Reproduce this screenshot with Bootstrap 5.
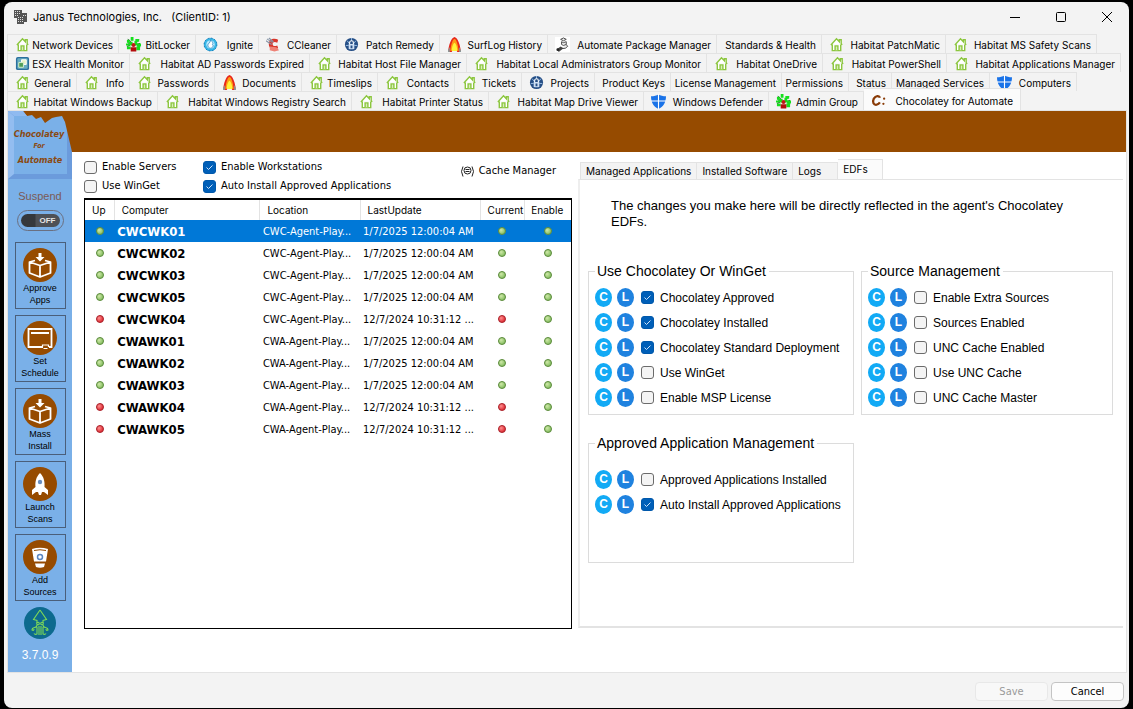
<!DOCTYPE html>
<html lang="en">
<head>
<meta charset="utf-8">
<meta name="viewport" content="width=device-width, initial-scale=1">
<title>Janus Technologies, Inc.</title>
<link rel="stylesheet" href="https://cdn.jsdelivr.net/npm/bootstrap@5.3.0/dist/css/bootstrap.min.css">
<script src="https://cdn.jsdelivr.net/npm/bootstrap@5.3.0/dist/js/bootstrap.bundle.min.js"></script>
<style>
  :root { --brown:#964b00; --sky:#7ab0e8; --line:#e3e3e3; --tahoma:"DejaVu Sans Condensed","DejaVu Sans",sans-serif; --ui:Inter,"Open Sans",sans-serif; --arial:"Liberation Sans",Arial,sans-serif; }
  body { background:#000; color:#000; font:11px/16px var(--tahoma); min-height:100vh; padding:2px 4px; }
  button { color:inherit; font:inherit; padding:0; border:0; background:none; }
  .win { background:#f3f3f3; border-radius:8px; min-height:calc(100vh - 4px); overflow:hidden; }
  .titlebar { height:32px; padding:0 14px 2px 9px; font:11px/16px var(--ui); white-space:pre; }
  .winctl { gap:30px; }
  .winctl button { width:16px; height:16px; display:flex; align-items:center; justify-content:center; }

  .tabrows { padding:0 2px 0 3px; font:10px/16px var(--ui); }
  .tabrow { display:grid; height:19px; }
  .t1 { grid-template-columns:112fr 77fr 63fr 78fr 103fr 108fr 169fr 105fr 124fr 151fr 30fr; }
  .t2 { grid-template-columns:123fr 180fr 157fr 240fr 116fr 124fr 174fr 6fr; }
  .t3 { grid-template-columns:70fr 53fr 85fr 87fr 76fr 77fr 67fr 73fr 76fr 111fr 67fr 43fr 98fr 87fr 50fr; }
  .t4 { grid-template-columns:151fr 194fr 137fr 155fr 125fr 95fr 157fr 106fr; }
  .tab { display:flex; align-items:center; justify-content:flex-end; min-width:0; padding:2px 5px 0 5px; white-space:nowrap; border-top:1px solid var(--line); border-right:1px solid var(--line); }
  .tabrow .tab:first-child { border-left:1px solid var(--line); }
  .tab svg { width:15px; height:15px; margin:0 auto 1px 2px; flex:none; }
  .tab.on { background:#fbfbfb; margin-top:-3px; padding-right:7px; }

  .client { margin:0 2px 0 3px; border:1px solid var(--line); background:#fff; }
  .side { width:64px; background:var(--sky); font-family:var(--arial); }
  .logo { display:block; width:64px; height:68px; }
  .suspend { font-size:11px; line-height:14px; color:#7a5a55; margin-top:10px; }
  .switch { width:47px; height:21px; border:1px solid #6a6f80; border-radius:11px; padding:3px; margin-top:7px; }
  .switch span { display:block; height:13px; border-radius:7px; background:linear-gradient(90deg,#35383c 0 14px,#4e5156 15px); color:#e6e6e6; font:bold 8px/13px var(--arial); text-align:right; padding-right:4px; }
  .act { width:51px; height:67px; border:1px solid #4a5f7a; font-size:9px; line-height:12px; color:#000; display:flex; flex-direction:column; align-items:center; padding-top:5px; }
  .act svg { width:34px; height:34px; flex:none; }
  .acts { margin-top:11px; gap:6px; }
  .squid { width:32px; height:32px; margin-top:6px; }
  .ver { color:#fff; font-size:12px; margin:8px 0 9px; }
  .banner { height:41px; background:var(--brown); }

  .panes { display:grid; grid-template-columns:488fr 545fr; gap:6px; padding:7px 3px 43px 12px; }
  .pane { display:flex; flex-direction:column; min-width:0; }
  .opts { display:grid; grid-template-columns:119px 1fr auto; height:39px; padding-right:16px; }
  .opts label, .edf label { display:inline-flex; align-items:center; gap:5px; }
  .opts .pair { display:flex; flex-direction:column; gap:3px; }
  .form-check-input { width:13px; height:13px; margin:0; float:none; flex:none; border:1px solid #6b6b6b; border-radius:3px !important; background-color:#f4f4f4; }
  .form-check-input:checked { background-color:#005fb8; border-color:#0058ab; background-size:11px; background-image:url("data:image/svg+xml,%3csvg xmlns='http://www.w3.org/2000/svg' viewBox='0 0 11 11'%3e%3cpath fill='none' stroke='%23cfe4fa' d='m2.500 5.500 2 2 4-4'/%3e%3c/svg%3e") !important; }
  .list { flex:1; border:1px solid #000; border-top-width:2px; }
  .list table { width:100%; table-layout:fixed; border-collapse:collapse; }
  .list th { height:20px; padding:0 0 0 7px; font-weight:400; font:10px/16px var(--ui); border-right:1px solid var(--line); white-space:nowrap; }
  .list th:last-child { border:0; padding-left:6px; }
  .list td { height:22px; padding:2px 3px 0; white-space:nowrap; overflow:hidden; text-overflow:ellipsis; }
  .list td.pc { font-size:13px; font-weight:700; }
  .list tr.sel { background:#0078d7; color:#fff; }
  .dot { display:block; width:8px; height:8px; margin:0 auto 2px; border-radius:50%; border:1px solid #5b8a3c; background:radial-gradient(circle at 35% 35%,#cfe8a8,#8cc267 70%); }
  .dot.r { border-color:#a8232b; background:radial-gradient(circle at 35% 35%,#ff8f8f,#e0323a 70%); }

  .subtabs { display:flex; align-items:flex-end; height:21px; padding-left:2px; font:10px/16px var(--ui); margin-bottom:-1px; }
  .subtabs button { height:18px; padding:0 5px; border:1px solid var(--line); border-left-width:0; background:#f3f3f3; text-align:left; }
  .subtabs button:first-child { border-left-width:1px; }
  .subtabs .on { height:21px; width:45px; background:#fbfbfb; border-bottom:0; padding-bottom:2px; }
  .edf { flex:1; border-top:1px solid var(--line); border-left:2px solid #eee; border-bottom:2px solid var(--line); padding:18px 10px 0 8px; font:12px/16px var(--arial); margin-bottom:1px; }
  .note { font-size:13px; line-height:16px; margin:0 0 32px 23px; max-width:480px; min-height:32px; }
  .groups { display:grid; grid-template-columns:266fr 252fr; gap:19px 7px; }
  .groups fieldset { border:1px solid #dcdcdc; padding:5px 0 4px 6px; min-height:152px; }
  .groups fieldset.tall { min-height:129px; padding-top:15px; }
  .groups legend { float:none; width:auto; margin:0; padding:0 3px 0 2px; font-size:14px; line-height:18px; }
  .ln { display:flex; align-items:center; height:25px; white-space:nowrap; }
  .ln button { width:17px; height:19px; border-radius:50%; color:#fff; font:bold 12px/19px var(--arial); background:#12aaf5; margin-right:5px; }
  .ln button + button { background:#1f82df; margin-right:7px; }
  .ln label { gap:6px; }

  .foot { padding:9px 5px 7px; gap:3px; }
  .foot button { width:73px; height:19px; border:1px solid #c4c4c4; border-radius:4px; background:#fdfdfd; line-height:16px; font-size:11px; }
  .foot button:disabled { color:#9a9a9a; border-color:#e8e8e8; background:#f8f8f8; }
</style>
</head>
<body>
<svg class="d-none" xmlns="http://www.w3.org/2000/svg">
  <symbol id="house" viewBox="0 0 16 16"><path d="M2 8.500 8 2l3 3V3h2v4l1 1.500M3.500 8v6.500h9V8" fill="#fff" stroke="#8cc63f" stroke-width="1.500"/><path d="M6.500 14V9.500h3V14" fill="#d8efb8" stroke="#8cc63f" stroke-width="1.500"/></symbol>
  <symbol id="people" viewBox="0 0 16 16"><path d="M5 5 2 2.500M11 5l3-2M4 9 1 10M12 9l3 2M5 8l-3-2M11 8l4-1" stroke="#111" stroke-width="1"/><path d="M5 0h3v4H5zM1 3h3v3H1zM10 2h4v3h-4zM0 7h4v2H0zM3 5h4v4H3zM9 4h3v5H9zM12 7h4v3h-4zM1 10h4v3H1zM11 10h4v4h-4z" fill="#14e01c"/><circle cx="8" cy="8.500" r="2.200" fill="#c01818"/><path d="M5 15.500V11h6v4.500z" fill="#b40d0d"/></symbol>
  <symbol id="ignite" viewBox="0 0 16 16"><circle cx="8" cy="8" r="7" fill="#39b7e6"/><circle cx="8" cy="8" r="6.800" fill="none" stroke="#0b6fae" stroke-dasharray="2 1.500"/><circle cx="8" cy="8" r="4.500" fill="#bdeaff"/><path d="M8 3c3 3 3 4 2 5 2 1 0 4-2 4s-4-3-2-5c1-1 2-2 2-4z" fill="#fff" stroke="#1580c0" stroke-width=".8"/></symbol>
  <symbol id="cclean" viewBox="0 0 16 16"><path d="M13 3C9 .5 3 2 3 7.500s5 7 10 4.500l-1-3c-3 1.500-5 .5-5-1.500s2-3 5-1.500z" fill="#d8352a"/><path d="M0 4l6 4M1 2l6 4M3 1l5 4" stroke="#8796a8" stroke-width="1.200"/><path d="M4 10l7 1 3 3-5 1.500-5-1.500z" fill="#ee8175"/></symbol>
  <symbol id="globe" viewBox="0 0 16 16"><circle cx="8" cy="8" r="7" fill="#264f86"/><path d="M8 1v3M3.500 4l2 3M12.500 4l-2 3M2 9h3M11 9h3" stroke="#9cc0e6"/><path d="M6 7.500V6a2 2 0 0 1 4 0v1.500" fill="none" stroke="#fff" stroke-width="1.200"/><path d="M5 7.500h6V12l-1 1H6l-1-1z" fill="#cfe0f4"/><path d="M7 9h2v3H7z" fill="#264f86"/></symbol>
  <symbol id="flame" viewBox="0 0 16 16"><path d="M1 16C2 9 4 1 8 0c4 1 6 9 7 16h-4L8 11l-3 5z" fill="#e8261b"/><path d="M3.500 15C4 9 6 2 8 2s4 7 4.500 13l-2-1h-5z" fill="#ff9a14"/><path d="M5 15c0-5 2-9 3-9s3 4 3 9z" fill="#fff23a"/><path d="M1 16c0-2 1-4 2-5v5zM15 16c0-2-1-4-2-5v5z" fill="#8b9a9a"/></symbol>
  <symbol id="pkg" viewBox="0 0 16 16"><rect width="16" height="16" fill="#fff"/><path d="M6 2.500 9 1l3 1.500L9 4zM7 5l2 1 3-1v3l-3 1-2-1zM12 8l1.500 2L11 12l-5 .5" fill="#eee" stroke="#444"/><path d="M2 13l4-3 3 2-5 4z" fill="#444"/><circle cx="3" cy="13.500" r="1.500" fill="#222"/></symbol>
  <symbol id="esx" viewBox="0 0 16 16"><rect x="1" y="1" width="14" height="14" rx="2" fill="#2b6f9e"/><rect x="2.500" y="2.500" width="11" height="11" rx="1" fill="#6aaec0"/><path d="M7 4h5v5H7z" fill="#e9f3c4" stroke="#fff"/><path d="M4 7h5v5H4z" fill="#4f9d56" stroke="#d9f0d0"/></symbol>
  <symbol id="shield" viewBox="0 0 16 16"><path d="M0 2.500C3 2.500 6 1.500 8 .5c2 1 5 2 8 2C16 9 13 14 8 16 3 14 0 9 0 2.500z" fill="#1a73e8"/><path d="M8 0v16M0 7.500h16" stroke="#fff" stroke-width="1.200"/></symbol>
  <symbol id="choco" viewBox="0 0 16 16"><path d="M9.500 5C9 2.500 5 2.500 3 6c-2 4 0 7 3 6.500 1.500-.3 2.500-1 3.500-2.500" fill="none" stroke="#8a3c08" stroke-width="2.400"/><circle cx="14" cy="6" r="1.200" fill="#8a3c08"/><circle cx="13.200" cy="11.500" r="1.200" fill="#8a3c08"/></symbol>
  <symbol id="box" viewBox="0 0 34 34"><circle cx="17" cy="17" r="17" fill="#964b00"/><path d="M15.500 5h3v4h3L17 13.500 12.500 9h3z" fill="#fff"/><path d="M12 12.500 6.500 14v11L17 29l10.500-4V14L22 12.500M6.500 14 17 17.500 27.500 14M17 17.500V29" fill="none" stroke="#fff" stroke-width="1.800" stroke-linejoin="round"/></symbol>
</svg>

<div class="win d-flex flex-column">
  <header class="titlebar d-flex align-items-center">
    <svg width="16" height="16" viewBox="0 0 16 16" class="me-1"><path d="M1 1h8v3h5v9h-3v2H4V9H1z" fill="#555"/><path d="M2 2.500h6M2 4.500h6M2 6.500h4M5 8.500h6M5 10.500h5M5 12.500h5M10 6.500h4" stroke="#ddd" stroke-dasharray="1 1"/></svg>
    <span>Janus Technologies, Inc.   (ClientID: 1)</span>
    <div class="winctl d-flex ms-auto">
      <button aria-label="Minimize"><svg width="12" height="12"><path d="M1 6.500h10" stroke="#000"/></svg></button>
      <button aria-label="Maximize"><svg width="12" height="12"><rect x="1.500" y="1.500" width="9" height="9" rx="1" fill="none" stroke="#000"/></svg></button>
      <button aria-label="Close"><svg width="12" height="12"><path d="m1 1 10 10M11 1 1 11" stroke="#000"/></svg></button>
    </div>
  </header>

  <nav class="tabrows" role="tablist">
    <div class="tabrow t1">
      <button class="tab"><svg><use href="#house"/></svg>Network Devices</button>
      <button class="tab"><svg><use href="#people"/></svg>BitLocker</button>
      <button class="tab"><svg><use href="#ignite"/></svg>Ignite</button>
      <button class="tab"><svg><use href="#cclean"/></svg>CCleaner</button>
      <button class="tab"><svg><use href="#globe"/></svg>Patch Remedy</button>
      <button class="tab"><svg><use href="#flame"/></svg>SurfLog History</button>
      <button class="tab"><svg><use href="#pkg"/></svg>Automate Package Manager</button>
      <button class="tab">Standards &amp; Health</button>
      <button class="tab"><svg><use href="#house"/></svg>Habitat PatchMatic</button>
      <button class="tab"><svg><use href="#house"/></svg>Habitat MS Safety Scans</button>
    </div>
    <div class="tabrow t2">
      <button class="tab"><svg><use href="#esx"/></svg>ESX Health Monitor</button>
      <button class="tab"><svg><use href="#house"/></svg>Habitat AD Passwords Expired</button>
      <button class="tab"><svg><use href="#house"/></svg>Habitat Host File Manager</button>
      <button class="tab"><svg><use href="#house"/></svg>Habitat Local Administrators Group Monitor</button>
      <button class="tab"><svg><use href="#house"/></svg>Habitat OneDrive</button>
      <button class="tab"><svg><use href="#house"/></svg>Habitat PowerShell</button>
      <button class="tab"><svg><use href="#house"/></svg>Habitat Applications Manager</button>
    </div>
    <div class="tabrow t3">
      <button class="tab"><svg><use href="#house"/></svg>General</button>
      <button class="tab"><svg><use href="#house"/></svg>Info</button>
      <button class="tab"><svg><use href="#house"/></svg>Passwords</button>
      <button class="tab"><svg><use href="#flame"/></svg>Documents</button>
      <button class="tab"><svg><use href="#house"/></svg>Timeslips</button>
      <button class="tab"><svg><use href="#house"/></svg>Contacts</button>
      <button class="tab"><svg><use href="#house"/></svg>Tickets</button>
      <button class="tab"><svg><use href="#globe"/></svg>Projects</button>
      <button class="tab">Product Keys</button>
      <button class="tab">License Management</button>
      <button class="tab">Permissions</button>
      <button class="tab">Status</button>
      <button class="tab">Managed Services</button>
      <button class="tab"><svg><use href="#shield"/></svg>Computers</button>
    </div>
    <div class="tabrow t4">
      <button class="tab"><svg><use href="#house"/></svg>Habitat Windows Backup</button>
      <button class="tab"><svg><use href="#house"/></svg>Habitat Windows Registry Search</button>
      <button class="tab"><svg><use href="#house"/></svg>Habitat Printer Status</button>
      <button class="tab"><svg><use href="#house"/></svg>Habitat Map Drive Viewer</button>
      <button class="tab"><svg><use href="#shield"/></svg>Windows Defender</button>
      <button class="tab"><svg><use href="#people"/></svg>Admin Group</button>
      <button class="tab on" aria-selected="true"><svg><use href="#choco"/></svg>Chocolatey for Automate</button>
    </div>
  </nav>

  <main class="client d-flex flex-grow-1">
    <aside class="side d-flex flex-column align-items-center flex-shrink-0">
      <svg class="logo" viewBox="0 0 64 68">
        <rect width="64" height="68" fill="#6b9bdc"/><path d="M0 0v68l6-5V5z" fill="#93bdf0"/><rect x="6" y="3" width="53" height="60" fill="#7ab0e8"/>
        <path d="M15 0l4 5 5-1 4 4 5-2 4 6 7-5 4-1 6-1 3 6 7 30V0z" fill="#964b00"/>
        <path d="M0 0h15l4 5H6z" fill="#8fbaf0"/>
        <g fill="#8a4a12" font-family="'DejaVu Sans Condensed',sans-serif" font-weight="700" font-style="italic" text-anchor="middle"><text x="31" y="26" font-size="9">Chocolatey</text><text x="31" y="37" font-size="7">For</text><text x="32" y="52" font-size="9">Automate</text></g>
      </svg>
      <div class="suspend" id="susp">Suspend</div>
      <button class="switch" role="switch" aria-checked="false" aria-labelledby="susp"><span>OFF</span></button>
      <div class="acts d-flex flex-column">
        <button class="act"><svg><use href="#box"/></svg>Approve<br>Apps</button>
        <button class="act"><svg viewBox="0 0 34 34"><circle cx="17" cy="17" r="17" fill="#964b00"/><path d="M20 26H5.500V8h23v18H26M8 12h18" fill="none" stroke="#fff" stroke-width="1.800"/><path d="M19.500 26v-2h6v2M20.500 27.500h4" fill="none" stroke="#fff" stroke-width="1.200"/></svg>Set<br>Schedule</button>
        <button class="act"><svg><use href="#box"/></svg>Mass<br>Install</button>
        <button class="act"><svg viewBox="0 0 34 34"><circle cx="17" cy="17" r="17" fill="#964b00"/><path d="M17 6c4 4 5 9 4.500 14l3.500 3v5l-4-3h-2l-1 3h-2l-1-3h-2l-4 3v-5l3.500-3C12 15 13 10 17 6z" fill="#fff"/><circle cx="17" cy="15" r="2.200" fill="#6a8fc0"/></svg>Launch<br>Scans</button>
        <button class="act"><svg viewBox="0 0 34 34"><circle cx="17" cy="17" r="17" fill="#964b00"/><path d="M9 9q8-2.500 16 0l-2 12.500H11z M12 23.500h10l-1 3.500q-4 1.500-8 0z" fill="#fff"/><path d="M11 10.500q6-1.500 12 0" stroke="#964b00" fill="none"/><circle cx="17" cy="17" r="2.500" fill="#fff" stroke="#5b86c0" stroke-width="1.500"/></svg>Add<br>Sources</button>
      </div>
      <svg class="squid" viewBox="0 0 32 32"><circle cx="16" cy="16" r="16" fill="#0d6a8e"/><g fill="none" stroke="#7ed957" stroke-width="1.100"><path d="M16 3 9.500 12.500l3.500 1v2.500M16 3l6.500 9.500-3.500 1V16M13 18c0 4-5 1-5 5q2 1 2-1M19 18c0 4 5 1 5 5q-2 1-2-1M15 19v9M17 19v9M13 20v7q-2 1-3-.5M19 20v7q2 1 3-.5"/><circle cx="14" cy="16.500" r="1.300"/><circle cx="18" cy="16.500" r="1.300"/></g></svg>
      <div class="ver">3.7.0.9</div>
    </aside>

    <div class="flex-grow-1 d-flex flex-column">
      <div class="banner"></div>
      <div class="panes flex-grow-1">
        <section class="pane">
          <div class="opts">
            <div class="pair">
              <label><input class="form-check-input" type="checkbox">Enable Servers</label>
              <label><input class="form-check-input" type="checkbox">Use WinGet</label>
            </div>
            <div class="pair">
              <label><input class="form-check-input" type="checkbox" checked>Enable Workstations</label>
              <label><input class="form-check-input" type="checkbox" checked>Auto Install Approved Applications</label>
            </div>
            <button class="align-self-start d-flex align-items-center pt-1"><svg width="15" height="13" viewBox="0 0 15 13" fill="none" stroke="#222"><path d="M3 1.500q-3 5 0 10M12 1.500q3 5 0 10"/><circle cx="7.500" cy="5.500" r="3.500"/><path d="M5.500 4.500h4M5.500 6.500h4"/></svg><span class="ps-1">Cache Manager</span></button>
          </div>
          <div class="list">
            <table>
              <colgroup><col style="width:6%"><col style="width:30%"><col style="width:20.600%"><col style="width:24.700%"><col style="width:9.200%"><col></colgroup>
              <thead><tr><th>Up</th><th>Computer</th><th>Location</th><th>LastUpdate</th><th>Current</th><th>Enable</th></tr></thead>
              <tbody>
                <tr class="sel"><td><i class="dot"></i></td><td class="pc">CWCWK01</td><td>CWC-Agent-Play...</td><td>1/7/2025 12:00:04 AM</td><td><i class="dot"></i></td><td><i class="dot"></i></td></tr>
                <tr><td><i class="dot"></i></td><td class="pc">CWCWK02</td><td>CWC-Agent-Play...</td><td>1/7/2025 12:00:04 AM</td><td><i class="dot"></i></td><td><i class="dot"></i></td></tr>
                <tr><td><i class="dot"></i></td><td class="pc">CWCWK03</td><td>CWC-Agent-Play...</td><td>1/7/2025 12:00:04 AM</td><td><i class="dot"></i></td><td><i class="dot"></i></td></tr>
                <tr><td><i class="dot"></i></td><td class="pc">CWCWK05</td><td>CWC-Agent-Play...</td><td>1/7/2025 12:00:04 AM</td><td><i class="dot"></i></td><td><i class="dot"></i></td></tr>
                <tr><td><i class="dot r"></i></td><td class="pc">CWCWK04</td><td>CWC-Agent-Play...</td><td>12/7/2024 10:31:12 ...</td><td><i class="dot r"></i></td><td><i class="dot"></i></td></tr>
                <tr><td><i class="dot"></i></td><td class="pc">CWAWK01</td><td>CWA-Agent-Play...</td><td>1/7/2025 12:00:04 AM</td><td><i class="dot"></i></td><td><i class="dot"></i></td></tr>
                <tr><td><i class="dot"></i></td><td class="pc">CWAWK02</td><td>CWA-Agent-Play...</td><td>1/7/2025 12:00:04 AM</td><td><i class="dot"></i></td><td><i class="dot"></i></td></tr>
                <tr><td><i class="dot"></i></td><td class="pc">CWAWK03</td><td>CWA-Agent-Play...</td><td>1/7/2025 12:00:04 AM</td><td><i class="dot"></i></td><td><i class="dot"></i></td></tr>
                <tr><td><i class="dot r"></i></td><td class="pc">CWAWK04</td><td>CWA-Agent-Play...</td><td>12/7/2024 10:31:12 ...</td><td><i class="dot r"></i></td><td><i class="dot"></i></td></tr>
                <tr><td><i class="dot r"></i></td><td class="pc">CWAWK05</td><td>CWA-Agent-Play...</td><td>12/7/2024 10:31:12 ...</td><td><i class="dot r"></i></td><td><i class="dot"></i></td></tr>
              </tbody>
            </table>
          </div>
        </section>

        <section class="pane">
          <div class="subtabs" role="tablist">
            <button>Managed Applications</button><button>Installed Software</button><button class="pe-3">Logs</button><button class="on" aria-selected="true">EDFs</button>
          </div>
          <div class="edf">
            <p class="note">The changes you make here will be directly reflected in the agent's Chocolatey<br>EDFs.</p>
            <div class="groups">
              <fieldset><legend>Use Chocolatey Or WinGet</legend>
                <div class="ln"><button>C</button><button>L</button><label><input class="form-check-input" type="checkbox" checked>Chocolatey Approved</label></div>
                <div class="ln"><button>C</button><button>L</button><label><input class="form-check-input" type="checkbox" checked>Chocolatey Installed</label></div>
                <div class="ln"><button>C</button><button>L</button><label><input class="form-check-input" type="checkbox" checked>Chocolatey Standard Deployment</label></div>
                <div class="ln"><button>C</button><button>L</button><label><input class="form-check-input" type="checkbox">Use WinGet</label></div>
                <div class="ln"><button>C</button><button>L</button><label><input class="form-check-input" type="checkbox">Enable MSP License</label></div>
              </fieldset>
              <fieldset><legend>Source Management</legend>
                <div class="ln"><button>C</button><button>L</button><label><input class="form-check-input" type="checkbox">Enable Extra Sources</label></div>
                <div class="ln"><button>C</button><button>L</button><label><input class="form-check-input" type="checkbox">Sources Enabled</label></div>
                <div class="ln"><button>C</button><button>L</button><label><input class="form-check-input" type="checkbox">UNC Cache Enabled</label></div>
                <div class="ln"><button>C</button><button>L</button><label><input class="form-check-input" type="checkbox">Use UNC Cache</label></div>
                <div class="ln"><button>C</button><button>L</button><label><input class="form-check-input" type="checkbox">UNC Cache Master</label></div>
              </fieldset>
              <fieldset class="tall"><legend>Approved Application Management</legend>
                <div class="ln"><button>C</button><button>L</button><label><input class="form-check-input" type="checkbox">Approved Applications Installed</label></div>
                <div class="ln"><button>C</button><button>L</button><label><input class="form-check-input" type="checkbox" checked>Auto Install Approved Applications</label></div>
              </fieldset>
            </div>
          </div>
        </section>
      </div>
    </div>
  </main>

  <footer class="foot d-flex justify-content-end">
    <button disabled>Save</button><button>Cancel</button>
  </footer>
</div>
</body>
</html>
